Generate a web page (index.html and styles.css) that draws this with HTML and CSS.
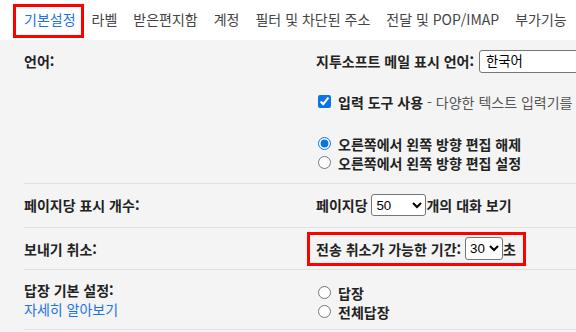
FILE: index.html
```html
<!DOCTYPE html>
<html lang="ko">
<head>
    <meta charset="UTF-8">
    <meta name="viewport" content="width=device-width, initial-scale=1.0">
    <title>설정</title>
    <link rel="stylesheet" href="styles.css">
</head>
<body>
    <nav class="tabs">
        <a class="tab active marked">기본설정</a>
        <a class="tab">라벨</a>
        <a class="tab">받은편지함</a>
        <a class="tab">계정</a>
        <a class="tab">필터 및 차단된 주소</a>
        <a class="tab">전달 및 POP/IMAP</a>
        <a class="tab">부가기능</a>
    </nav>

    <div class="settings">
        <div class="row row-lang">
            <div class="label">언어:</div>
            <div class="value">
                <div class="line lang-line">
                    <span class="strong">지투소프트 메일 표시 언어:</span>
                    <select class="lang-select">
                        <option>한국어</option>
                    </select>
                </div>
                <label class="line check-line">
                    <input type="checkbox" checked>
                    <span><span class="strong">입력 도구 사용</span> <span class="muted">- 다양한 텍스트 입력기를 사용</span></span>
                </label>
                <div class="radios">
                    <label class="line"><input type="radio" name="rtl" checked><span class="strong">오른쪽에서 왼쪽 방향 편집 해제</span></label>
                    <label class="line"><input type="radio" name="rtl"><span class="strong">오른쪽에서 왼쪽 방향 편집 설정</span></label>
                </div>
            </div>
        </div>

        <div class="row row-page">
            <div class="label">페이지당 표시 개수:</div>
            <div class="value">
                <div class="line strong">
                    페이지당&nbsp;<select class="num-select wide"><option>50</option></select>개의 대화 보기
                </div>
            </div>
        </div>

        <div class="row row-undo">
            <div class="label">보내기 취소:</div>
            <div class="value">
                <span class="undo-box marked strong">
                    전송 취소가 가능한 기간:&nbsp;<select class="num-select narrow"><option>30</option></select>초
                </span>
            </div>
        </div>

        <div class="row row-reply">
            <div class="label">
                답장 기본 설정:
                <a class="more">자세히 알아보기</a>
            </div>
            <div class="value">
                <label class="line"><input type="radio" name="reply"><span class="strong">답장</span></label>
                <label class="line"><input type="radio" name="reply"><span class="strong">전체답장</span></label>
            </div>
        </div>
    </div>
</body>
</html>
```

FILE: styles.css
```css
body {
    margin: 0;
    font-family: "Noto Sans CJK KR", "Noto Sans", sans-serif;
    font-size: 14px;
    color: #222;
    background-color: #f4f4f4;
    overflow: hidden;
}

.tabs {
    display: flex;
    height: 40px;
    box-sizing: border-box;
    padding: 7px 0 0 16px;
    background-color: #fff;
    white-space: nowrap;
}

.tab {
    height: 28px;
    line-height: 24px;
    padding: 0 8px;
    color: #444;
    font-size: 14px;
}

.tab.active {
    color: #1a73e8;
    padding-right: 5px;
    margin-right: 3px;
}

.marked {
    outline: 3px solid #ff0000;
}

.settings {
    padding-left: 24px;
}

.row {
    display: grid;
    grid-template-columns: 292px 1fr;
    border-bottom: 1px solid #e0e0e0;
}

.label {
    font-weight: bold;
    line-height: 19px;
}

.strong {
    font-weight: bold;
}

.muted {
    color: #555;
    font-weight: normal;
}

.value {
    white-space: nowrap;
}

.line {
    display: flex;
    align-items: center;
    height: 19px;
}

input[type="checkbox"],
input[type="radio"] {
    width: 13px;
    height: 13px;
    margin: 0 7px 0 2px;
    accent-color: #0b74e5;
}

select {
    font-family: "Liberation Sans", "Noto Sans CJK KR", sans-serif;
    font-size: 13.33px;
    color: #000;
    height: 23px;
    background-color: #fff;
    border: 1px solid #767676;
    border-radius: 3px;
}

/* 언어 */
.row-lang {
    padding: 9px 0 11px;
}

.row-lang .label {
    line-height: 24px;
}

.lang-line {
    height: 24px;
}

.lang-select {
    width: 200px;
    margin-left: 5px;
    padding-left: 2px;
}

.check-line {
    margin-top: 19px;
}

.radios {
    margin-top: 23px;
}

/* 페이지당 표시 개수 */
.row-page {
    padding: 10px 0 11px;
}

.row-page .label {
    line-height: 22px;
}

.row-page .line {
    height: 22px;
}

.num-select.wide {
    width: 55px;
    height: 22px;
}

/* 보내기 취소 */
.row-undo {
    padding: 7px 0 6px;
}

.row-undo .label {
    line-height: 28px;
}

.undo-box {
    display: inline-flex;
    align-items: center;
    height: 28px;
    box-sizing: border-box;
    padding: 2px 7px 3px 6px;
    margin-left: -6px;
}

.num-select.narrow {
    width: 38px;
}

/* 답장 기본 설정 */
.row-reply {
    padding: 11px 0 8px;
}

.row-reply .value {
    padding-top: 2px;
}

.more {
    display: block;
    color: #1a73e8;
    font-weight: normal;
}
```
